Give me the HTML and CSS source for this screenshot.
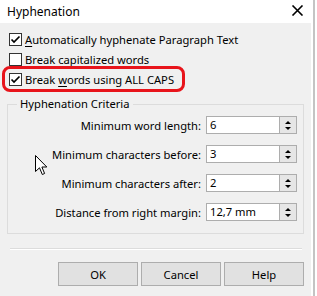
FILE: index.html
```html
<!DOCTYPE html>
<html lang="en">
<head>
<meta charset="UTF-8">
<title>Hyphenation</title>
<link rel="stylesheet" href="styles.css">
</head>
<body>
<div class="dialog">
	<div class="titlebar">
		<span class="title">Hyphenation</span>
		<svg class="close" width="13" height="11" viewBox="0 0 13 11"><path d="M1.5 0.5 L11.5 10.5 M11.5 0.5 L1.5 10.5" stroke="#000" stroke-width="1.6" fill="none"/></svg>
	</div>
	<div class="client">
		<label class="check"><span class="box"><svg width="11" height="11" viewBox="0 0 11 11"><path d="M1.5 5.5 L4 8 L9.5 2.5" stroke="#000" stroke-width="1.7" fill="none"/></svg></span><span><u>A</u>utomatically hyphenate Paragraph Text</span></label>
		<label class="check"><span class="box"></span><span>Break <u>c</u>apitalized words</span></label>
		<label class="check marked"><span class="box"><svg width="11" height="11" viewBox="0 0 11 11"><path d="M1.5 5.5 L4 8 L9.5 2.5" stroke="#000" stroke-width="1.7" fill="none"/></svg></span><span>Break <u>w</u>ords using ALL CAPS</span></label>

		<fieldset class="group">
			<legend>Hyphenation Criteria</legend>
			<div class="field">
				<span class="label">Minimum word length:</span>
				<span class="input">6</span>
				<span class="spin"><i class="up"></i><i class="down"></i></span>
			</div>
			<div class="field">
				<span class="label">Minimum characters before:</span>
				<span class="input">3</span>
				<span class="spin"><i class="up"></i><i class="down"></i></span>
			</div>
			<div class="field">
				<span class="label">Minimum characters after:</span>
				<span class="input">2</span>
				<span class="spin"><i class="up"></i><i class="down"></i></span>
			</div>
			<div class="field">
				<span class="label">Distance from right margin:</span>
				<span class="input">12,7 mm</span>
				<span class="spin"><i class="up"></i><i class="down"></i></span>
			</div>
		</fieldset>

		<div class="separator"></div>

		<div class="buttons">
			<button>OK</button>
			<button>Cancel</button>
			<button>Help</button>
		</div>

		<svg class="cursor" width="13" height="21" viewBox="0 0 13 21"><path d="M0.5 0.5 L0.5 16.5 L4.5 12.8 L7.3 19.5 L9.6 18.5 L6.9 12 L11.8 12 Z" fill="#fff" stroke="#000" stroke-width="1" stroke-linejoin="round"/></svg>
	</div>
</div>
</body>
</html>
```

FILE: styles.css
```css
html, body { margin: 0; padding: 0; background: white; color: black; font-family: "Noto Sans", sans-serif; font-size: 11.2px; }
.dialog { width: 313px; height: 296px; border-right: 2px solid #c4c4c4; display: flex; flex-direction: column; }
.titlebar { height: 23px; display: flex; align-items: center; justify-content: space-between; padding: 0 9px 0 7px; background: white; font-size: 12px; }
.title { margin-top: -1px; }
.close { margin-top: -2px; }
.client { flex: 1; background: #f0f0f0; margin-right: 2px; padding-top: 6px; position: relative; }

.check { display: flex; align-items: center; height: 20px; margin-left: 5px; padding-left: 4px; width: max-content; }
.check .box { width: 11px; height: 11px; border: 1px solid #333; background: white; margin-right: 3px; display: flex; }
.check u { text-decoration-thickness: 1px; text-underline-offset: 2px; }
.check.marked { width: 171px; padding-right: 2px; outline: 3px solid #e8141b; border-radius: 5px; }

.group { margin: 7px 0 0 7px; width: 297px; padding: 4px 0 0 0; border: 1px solid #dcdcdc; box-sizing: border-box; height: 138px; }
.group legend { margin-left: 9px; padding: 0 3px; line-height: 16px; }
.field { display: flex; align-items: center; justify-content: flex-end; height: 18px; margin-bottom: 11px; padding-right: 6px; }
.label { margin-right: 5px; }
.input { width: 69px; height: 16px; border: 1px solid #adadad; border-right: none; background: white; padding-left: 3px; line-height: 16px; box-sizing: content-box; }
.spin { width: 18px; height: 18px; border: 1px solid #adadad; background: #e6e6e6; display: flex; flex-direction: column; justify-content: space-between; align-items: center; padding: 4px 0 3px; box-sizing: border-box; }
.spin i { width: 0; height: 0; border-left: 3px solid transparent; border-right: 3px solid transparent; }
.spin .up { border-bottom: 3px solid #000; }
.spin .down { border-top: 3px solid #000; }

.separator { margin: 14px 9px 0 10px; border-top: 1px solid #dcdcdc; border-bottom: 1px solid #fff; }
.buttons { display: flex; gap: 3px; padding-left: 58px; margin-top: 12px; }
.buttons button { width: 80px; height: 24px; border: 1px solid #adadad; background: #e1e1e1; font-family: inherit; font-size: 11.2px; color: #000; padding: 0; }

.cursor { position: absolute; left: 35px; top: 132px; }
```
